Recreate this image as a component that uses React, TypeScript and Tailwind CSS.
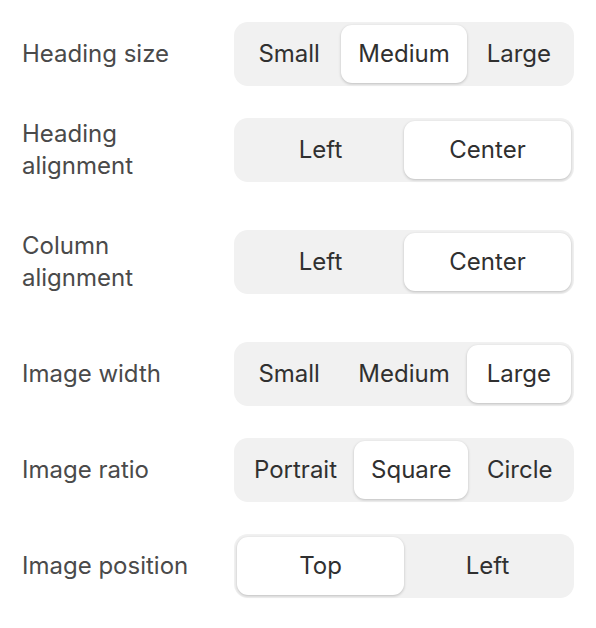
import React from 'react';

type Row = {
  label: string;
  options: string[];
  selected: number;
  extra?: boolean;
};

const rows: Row[] = [
  { label: 'Heading size', options: ['Small', 'Medium', 'Large'], selected: 1 },
  { label: 'Heading alignment', options: ['Left', 'Center'], selected: 1, extra: true },
  { label: 'Column alignment', options: ['Left', 'Center'], selected: 1, extra: true },
  { label: 'Image width', options: ['Small', 'Medium', 'Large'], selected: 2 },
  { label: 'Image ratio', options: ['Portrait', 'Square', 'Circle'], selected: 1 },
  { label: 'Image position', options: ['Top', 'Left'], selected: 0 },
];

const Segmented: React.FC<{ row: Row }> = ({ row }) => (
  <div className="flex-1 flex h-16 p-[3px] bg-[#f1f1f1] rounded-[14px]">
    {row.options.map((opt, i) => (
      <button
        key={opt}
        className={`flex-1 px-[17px] flex items-center justify-center rounded-[11px] text-[24px] text-[#303030] ${
          i === row.selected ? 'bg-white shadow-[0_1px_3px_rgba(0,0,0,0.22)]' : ''
        }`}
      >
        {opt}
      </button>
    ))}
  </div>
);

export default function App() {
  return (
    <div className="w-[596px] h-[628px] bg-white px-[22px] pt-[22px] flex flex-col gap-8 font-['Inter',sans-serif]">
      {rows.map(row => (
        <div key={row.label} className={`flex items-start ${row.extra ? 'pb-4' : ''}`}>
          <div className="w-[212px] shrink-0 h-16 flex items-center pr-4 text-[24px] leading-8 text-[#4a4a4a]">
            {row.label}
          </div>
          <Segmented row={row} />
        </div>
      ))}
    </div>
  );
}
